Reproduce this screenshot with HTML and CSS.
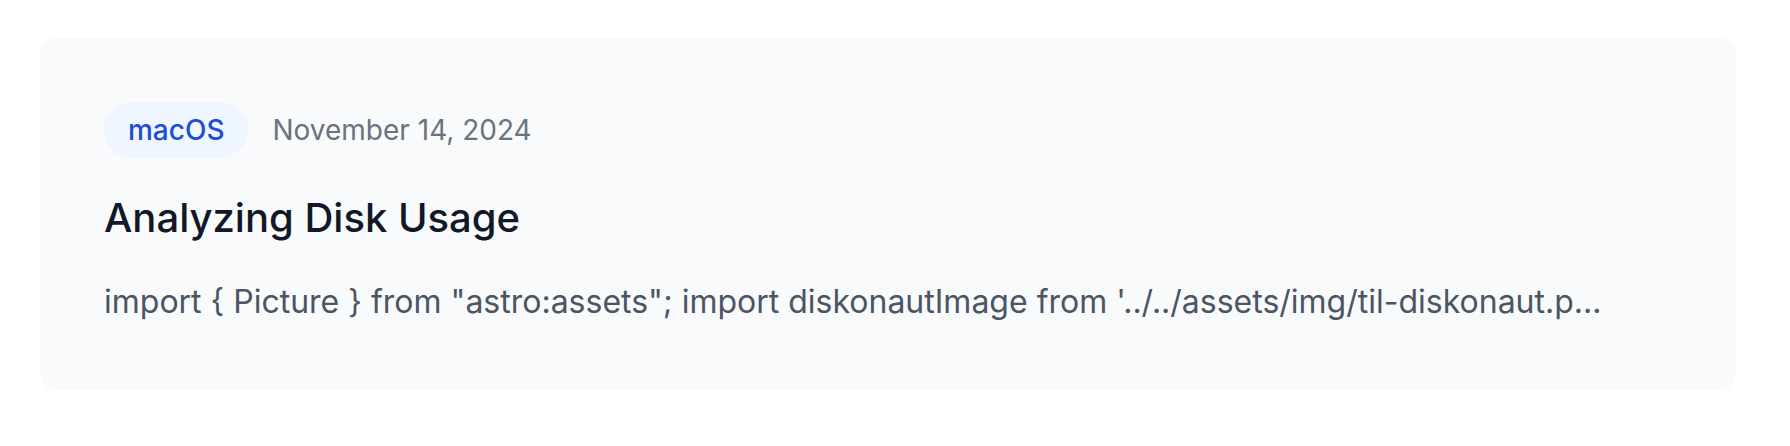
FILE: index.html
```html
<!DOCTYPE html>
<html lang="en">
<head>
<meta charset="utf-8">
<title>Analyzing Disk Usage</title>
<link rel="stylesheet" href="styles.css">
</head>
<body>
  <main class="page">
    <article class="card">
      <div class="meta">
        <span class="tag">macOS</span>
        <time class="date" datetime="2024-11-14">November 14, 2024</time>
      </div>
      <h2 class="title">Analyzing Disk Usage</h2>
      <p class="excerpt">import { Picture } from "astro:assets"; import diskonautImage from '../../assets/img/til-diskonaut.p...</p>
    </article>
  </main>
</body>
</html>
```

FILE: styles.css
```css
* {
  box-sizing: border-box;
}

html, body {
  margin: 0;
  padding: 0;
  background: #ffffff;
}

body {
  font-family: Inter, "Noto Sans", "Liberation Sans", sans-serif;
  -webkit-font-smoothing: antialiased;
}

.page {
  padding: 38px 54px 0 40px;
}

.card {
  background: #f9fafb;
  border-radius: 16px;
  padding: 64px;
}

.meta {
  display: flex;
  align-items: center;
  gap: 24px;
  margin-bottom: 32px;
}

.tag {
  display: inline-block;
  background: #eff6ff;
  color: #1d4ed8;
  font-size: 28px;
  line-height: 40px;
  font-weight: 500;
  padding: 8px 24px;
  border-radius: 9999px;
}

.date {
  color: #6b7280;
  font-size: 28px;
  line-height: 40px;
  font-weight: 400;
}

.title {
  margin: 0 0 32px 0;
  color: #111827;
  font-size: 40px;
  line-height: 56px;
  font-weight: 500;
}

.excerpt {
  margin: 0;
  color: #4b5563;
  font-size: 32px;
  line-height: 48px;
  font-weight: 400;
}
```
